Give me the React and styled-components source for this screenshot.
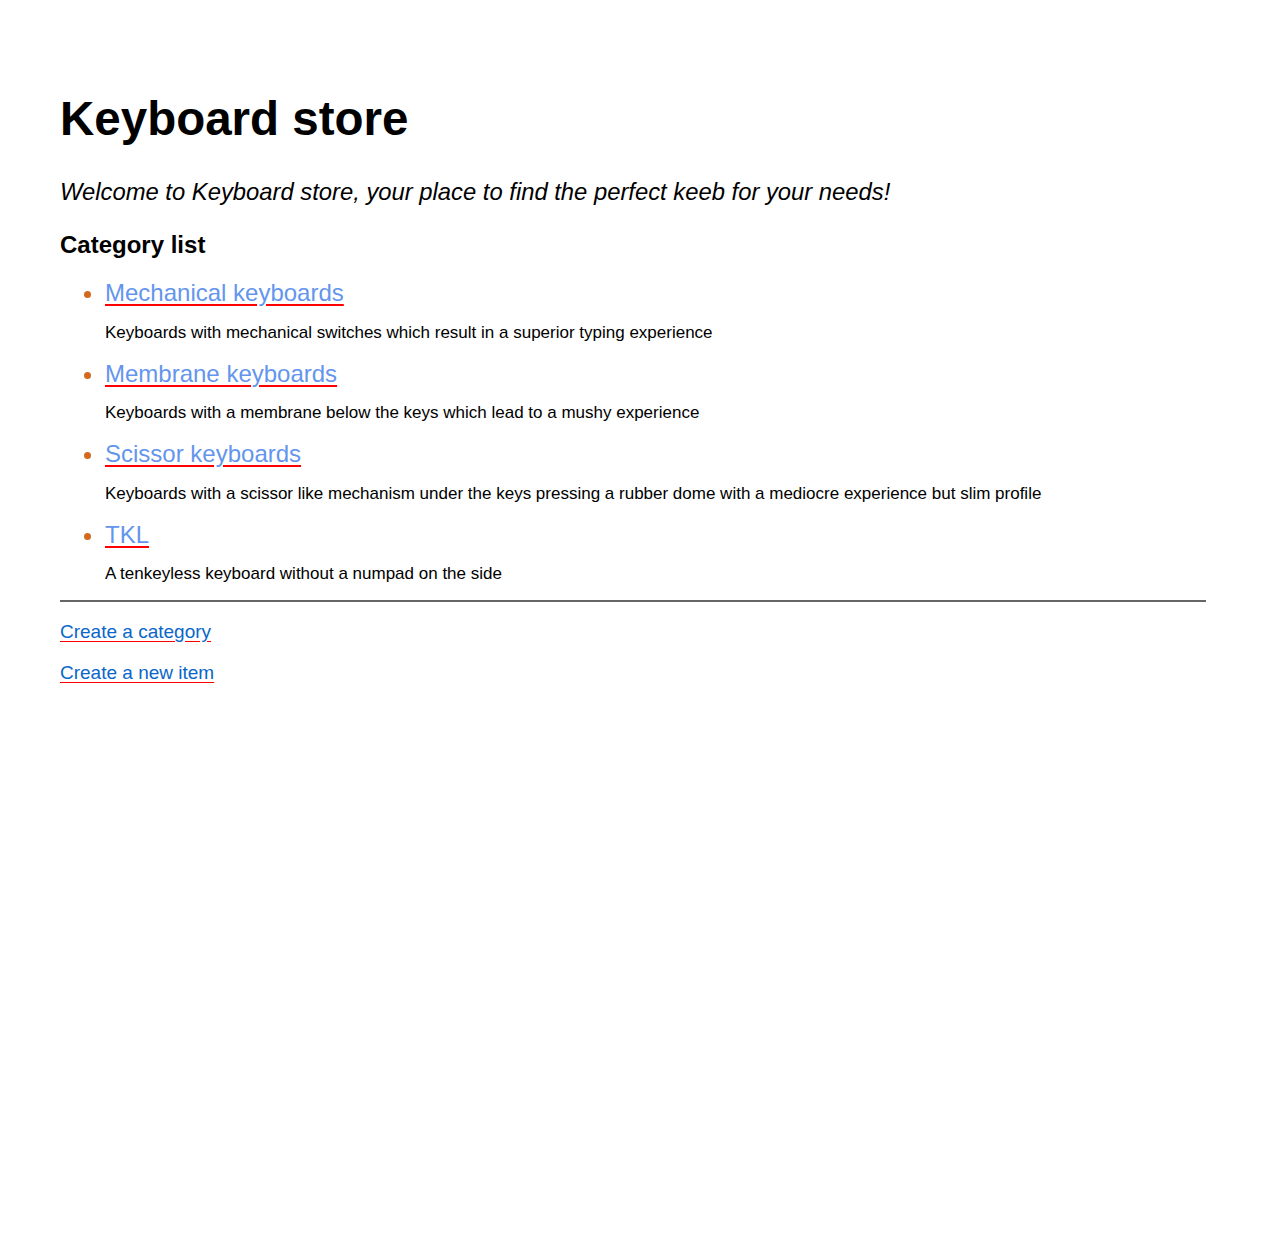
import React from "react";
import styled, { createGlobalStyle } from "styled-components";

const Global = createGlobalStyle`
  html, body { margin: 0; padding: 0; background: #fff; }
  body { font-family: "Liberation Sans", Arial, sans-serif; color: #000; }
`;

const Page = styled.main`
  padding: 91px 59px 60px 60px;
`;

const Title = styled.h1`
  margin: 0 0 32px;
  font-size: 47.5px;
  font-weight: 700;
  line-height: normal;
`;

const Welcome = styled.p`
  margin: 0 0 25px;
  font-size: 23.8px;
  font-style: italic;
  line-height: normal;
`;

const SectionTitle = styled.h3`
  margin: 0 0 20px;
  font-size: 24px;
  font-weight: 700;
  line-height: normal;
`;

const List = styled.ul`
  margin: 0 0 16px;
  padding-left: 45px;
  font-size: 24px;
  line-height: normal;
`;

const Item = styled.li`
  margin-bottom: 17px;
  &:last-child { margin-bottom: 0; }
  &::marker { color: #d2691e; }
`;

const CategoryLink = styled.a`
  color: #6495ed;
  text-decoration: underline;
  text-decoration-color: red;
  text-decoration-thickness: 2px;
  text-underline-offset: 3px;
`;

const Desc = styled.p`
  margin: 15.5px 0 0;
  font-size: 17px;
  line-height: normal;
`;

const Rule = styled.hr`
  margin: 0 0 19px;
  border: 0;
  border-top: 2px solid #666;
  height: 0;
`;

const Action = styled.p`
  margin: 0 0 19px;
  font-size: 19px;
  line-height: normal;
`;

const ActionLink = styled.a`
  color: #0a66c8;
  text-decoration: underline;
  text-decoration-color: red;
  text-underline-offset: 3px;
`;

const categories = [
  { name: "Mechanical keyboards", desc: "Keyboards with mechanical switches which result in a superior typing experience" },
  { name: "Membrane keyboards", desc: "Keyboards with a membrane below the keys which lead to a mushy experience" },
  { name: "Scissor keyboards", desc: "Keyboards with a scissor like mechanism under the keys pressing a rubber dome with a mediocre experience but slim profile" },
  { name: "TKL", desc: "A tenkeyless keyboard without a numpad on the side" },
];

export default function App() {
  return (
    <>
      <Global />
      <Page>
        <Title>Keyboard store</Title>
        <Welcome>Welcome to Keyboard store, your place to find the perfect keeb for your needs!</Welcome>
        <SectionTitle>Category list</SectionTitle>
        <List>
          {categories.map((c) => (
            <Item key={c.name}>
              <CategoryLink href="#">{c.name}</CategoryLink>
              <Desc>{c.desc}</Desc>
            </Item>
          ))}
        </List>
        <Rule />
        <Action><ActionLink href="#">Create a category</ActionLink></Action>
        <Action><ActionLink href="#">Create a new item</ActionLink></Action>
      </Page>
    </>
  );
}
